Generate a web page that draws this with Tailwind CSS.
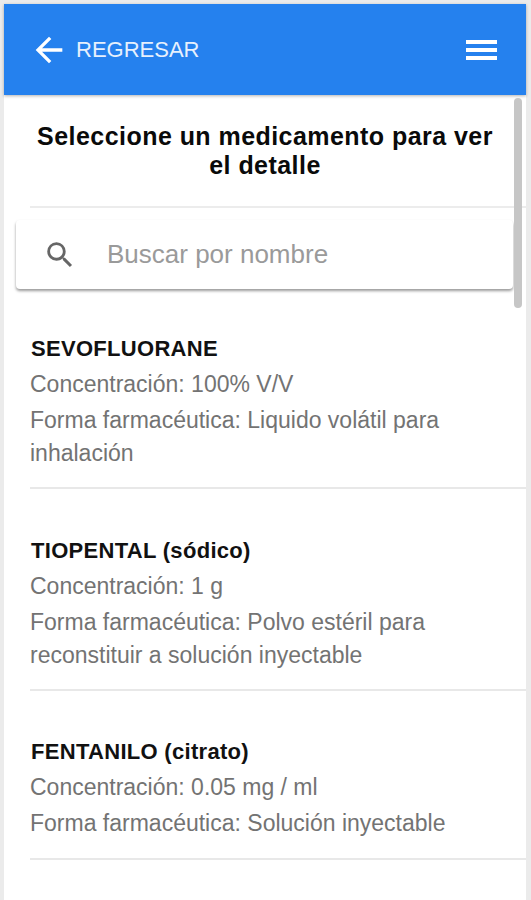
<!DOCTYPE html>
<html lang="es">
<head>
  <meta charset="UTF-8">
  <meta name="viewport" content="width=device-width, initial-scale=1.0">
  <title>Medicamentos</title>
  <script src="https://cdn.jsdelivr.net/npm/@tailwindcss/browser@4"></script>
</head>
<body class="bg-[#ebebeb] h-[900px] overflow-hidden font-['Liberation_Sans',Arial,sans-serif]">
  <div class="h-[900px] ml-1 mr-[5px] pt-1 flex flex-col">
    <header class="h-[91px] shrink-0 bg-[#2581ee] text-white flex items-center justify-between pl-[25px] pr-[29px] shadow-[0_1px_3px_rgba(0,0,0,0.3)] relative z-10">
      <div class="flex items-center gap-[7px]">
        <svg width="40" height="40" viewBox="0 0 24 24" fill="#fff"><path d="M20 11H7.83l5.59-5.59L12 4l-8 8 8 8 1.41-1.41L7.83 13H20v-2z"/></svg>
        <span class="text-[22px] text-[#e6f0fd]">REGRESAR</span>
      </div>
      <div class="w-[31px] flex flex-col gap-[4px]">
        <div class="h-[4px] bg-white"></div>
        <div class="h-[4px] bg-white"></div>
        <div class="h-[4px] bg-white"></div>
      </div>
    </header>
    <main class="relative flex-1 bg-white">
      <div class="absolute right-[4px] top-[3px] w-[8px] h-[210px] bg-[#c6c6c6] rounded-full z-10"></div>
      <h1 class="px-[25px] pt-[27px] pb-[26px] text-center text-[25px] leading-[29px] tracking-[0.45px] font-bold text-[#0a0a0a]">Seleccione un medicamento para ver el detalle</h1>
      <div class="ml-[26px] h-[2px] -mb-px bg-[#ececec]"></div>
      <div class="ml-[12px] w-[497px] mt-[13px] h-[69px] flex items-center gap-[30px] pl-[27px] bg-white shadow-[0_2px_3px_rgba(0,0,0,0.4)] rounded-sm">
        <svg width="34" height="34" viewBox="0 0 24 24" fill="#666"><path d="M15.5 14h-.79l-.28-.27A6.47 6.47 0 0 0 16 9.5 6.5 6.5 0 1 0 9.5 16c1.61 0 3.09-.59 4.23-1.57l.27.28v.79l5 4.99L20.49 19l-4.99-5zm-6 0C7.01 14 5 11.99 5 9.5S7.01 5 9.5 5 14 7.01 14 9.5 11.99 14 9.5 14z"/></svg>
        <span class="text-[26px] text-[#9a9a9a]">Buscar por nombre</span>
      </div>
      <ul class="ml-[26px]">
        <li class="pt-[43px] pb-[17px] pr-[30px] border-b-2 border-[#e8e8e8] text-[23px] leading-[33px] text-[#737373] flex flex-col gap-[3px]">
          <p class="text-[22px] font-bold text-[#111] pl-px tracking-[0.3px]">SEVOFLUORANE</p>
          <p>Concentración: 100% V/V</p>
          <p>Forma farmacéutica: Liquido volátil para inhalación</p>
        </li>
        <li class="pt-[45px] pb-[17px] pr-[30px] border-b-2 border-[#e8e8e8] text-[23px] leading-[33px] text-[#737373] flex flex-col gap-[3px]">
          <p class="text-[22px] font-bold text-[#111] pl-px tracking-[0.3px]">TIOPENTAL (sódico)</p>
          <p>Concentración: 1 g</p>
          <p>Forma farmacéutica: Polvo estéril para reconstituir a solución inyectable</p>
        </li>
        <li class="pt-[44px] pb-[18px] pr-[30px] border-b-2 border-[#e8e8e8] text-[23px] leading-[33px] text-[#737373] flex flex-col gap-[3px]">
          <p class="text-[22px] font-bold text-[#111] pl-px tracking-[0.3px]">FENTANILO (citrato)</p>
          <p>Concentración: 0.05 mg / ml</p>
          <p>Forma farmacéutica: Solución inyectable</p>
        </li>
      </ul>
    </main>
  </div>
</body>
</html>
